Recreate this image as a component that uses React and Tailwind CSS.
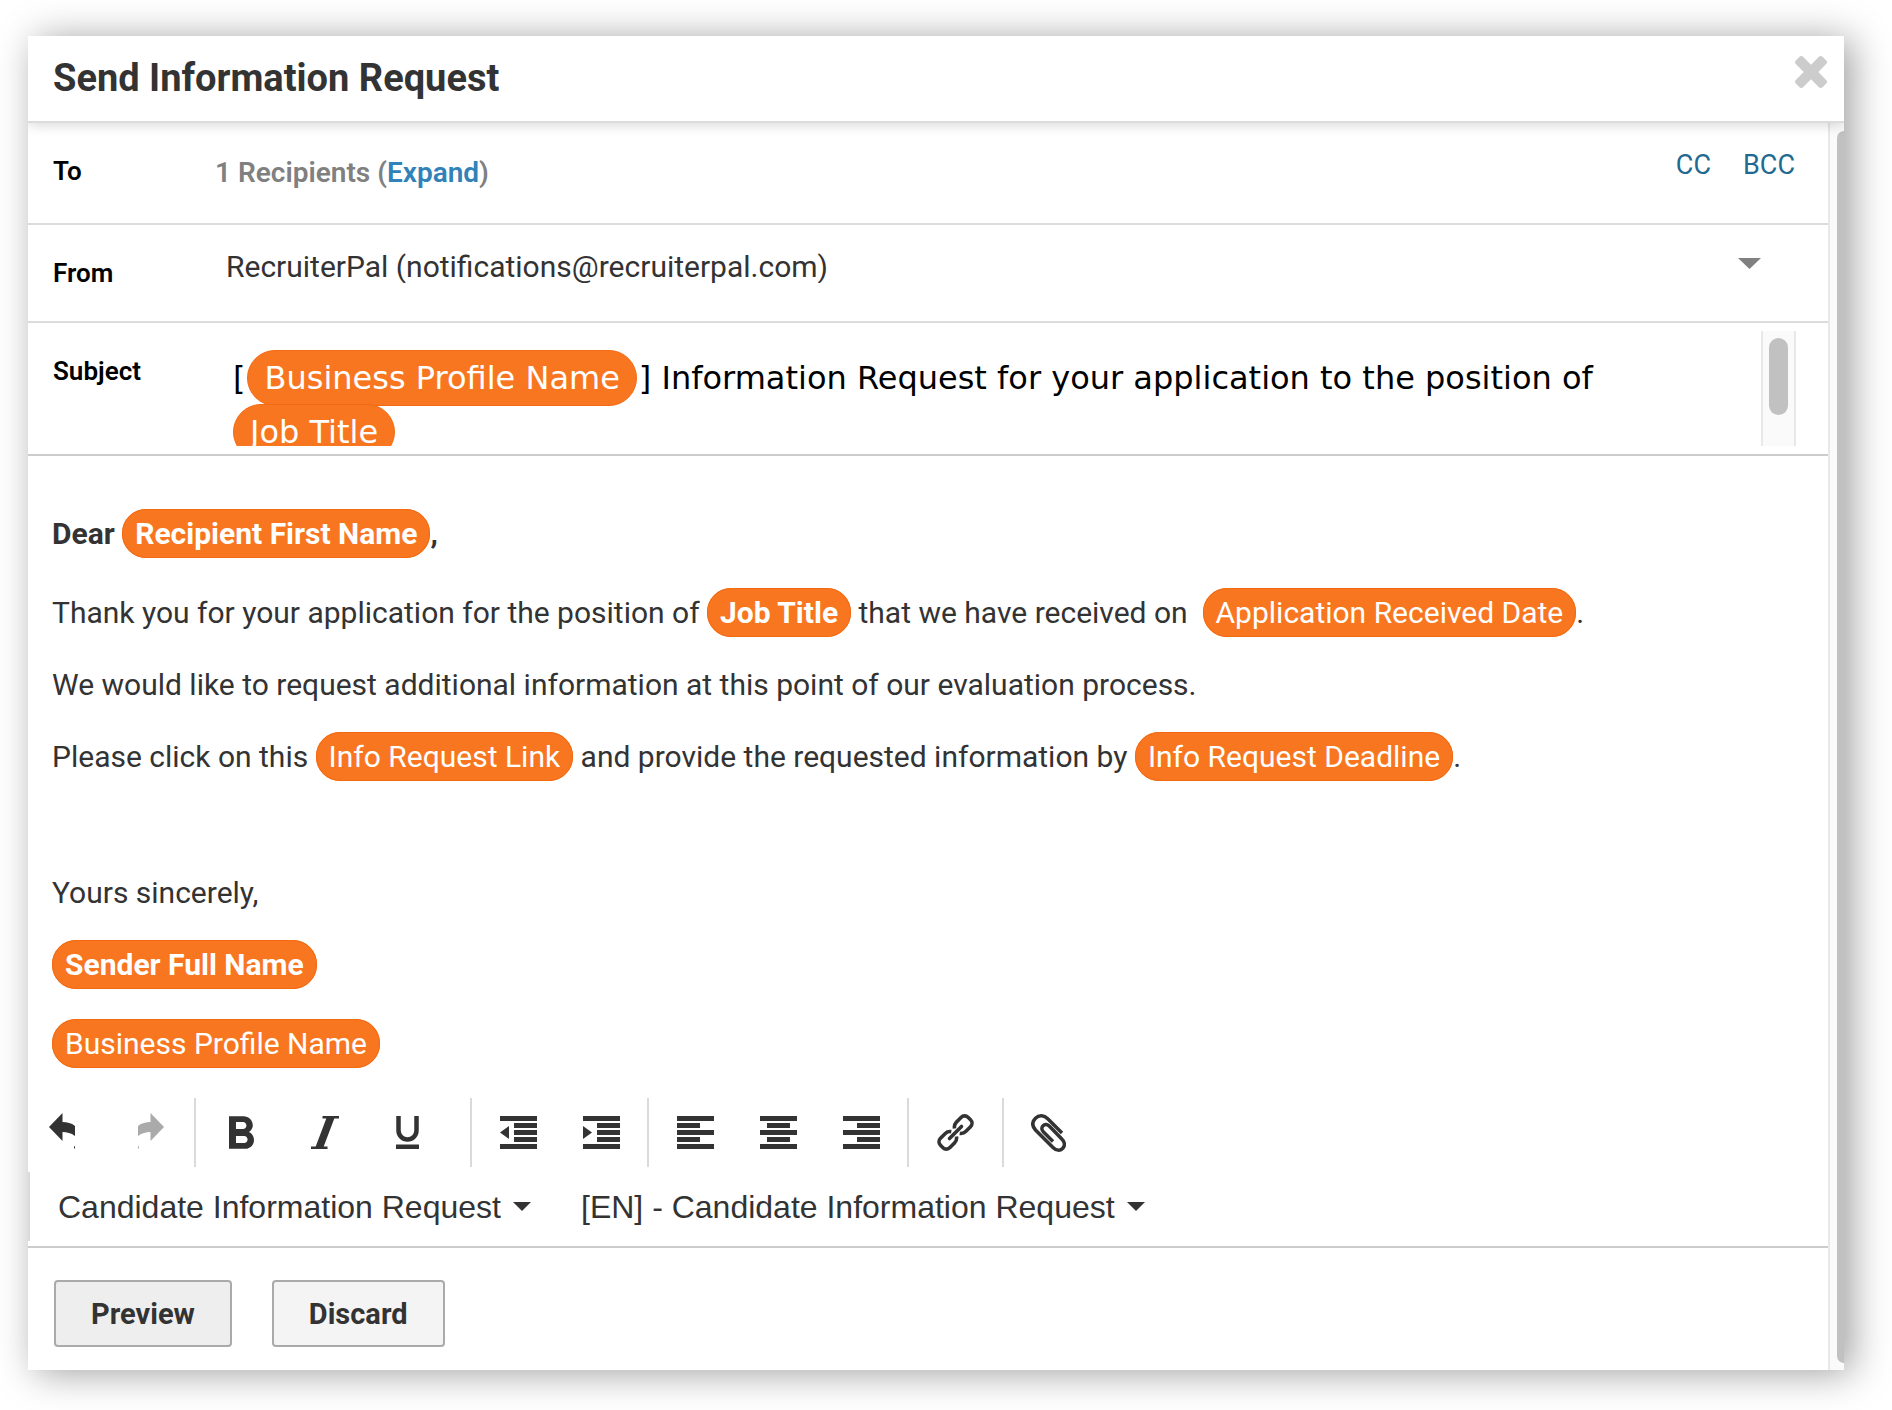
import React from "react";

function Icon({ w, h, box, children, className = "" }) {
  return (
    <svg width={w} height={h} viewBox={box || `0 0 ${w} ${h}`} className={className} aria-hidden="true">
      {children}
    </svg>
  );
}

function Caret({ className }) {
  return (
    <Icon w={18} h={9} className={className}>
      <path d="M0 0h18l-9 9z" fill="currentColor" />
    </Icon>
  );
}

function Tag({ children, bold }) {
  return (
    <span
      className={
        "whitespace-nowrap rounded-[24px] border border-[#f26a12] bg-[#f97620] px-3 py-1.5 text-white " +
        (bold ? "font-bold" : "")
      }
    >
      {children}
    </span>
  );
}

function SubjectTag({ children }) {
  return (
    <span className="-my-px inline-block h-14 rounded-[28px] border border-[#f26a12] bg-[#f97620] px-4 leading-[54px] text-white">
      {children}
    </span>
  );
}

function Field({ label, className, children }) {
  return (
    <div className={"flex items-start border-b-2 pl-[25px] " + className}>
      <div className="w-[162px] shrink-0 pt-8 text-[26px] leading-8 font-semibold text-black">{label}</div>
      {children}
    </div>
  );
}

function Tool({ label, children, disabled }) {
  return (
    <button
      type="button"
      aria-label={label}
      disabled={disabled}
      className="flex h-[69px] w-[83px] items-center justify-center text-[#333333] disabled:text-[#aaaaaa]"
    >
      {children}
    </button>
  );
}

function Bars({ rows, children }) {
  return (
    <Icon w={37} h={33}>
      {rows.map(([x, w], i) => (
        <rect key={i} x={x} y={i * 7} width={w} height={5} fill="currentColor" />
      ))}
      {children}
    </Icon>
  );
}

function TemplateSelect({ label, value }) {
  return (
    <div className="flex items-center gap-3">
      <select
        aria-label={label}
        defaultValue={value}
        className="appearance-none bg-transparent font-['Liberation_Sans',Arial,sans-serif] text-[32px] leading-10"
      >
        <option>{value}</option>
      </select>
      <Caret />
    </div>
  );
}

function ReplyArrow() {
  return (
    <>
      <path d="M0 14 13.500 0V9C18 9 22.500 10 26 13V23C22 20 18 19 13.500 19V28z" fill="currentColor" />
      <path d="M25 35.500v-1.500l1-1.500v3z" fill="currentColor" />
    </>
  );
}

export default function App() {
  return (
    <div className="min-h-screen bg-white pt-9 pr-12 pb-10 pl-7 font-[Roboto,sans-serif] text-[#333333]">
      <div role="dialog" aria-labelledby="dialog-title" className="bg-white shadow-[8px_3px_36px_rgba(0,0,0,0.38)]">
        <header className="relative flex h-[87px] items-center justify-between border-b-2 border-[#dcdcdc] pr-[17px] pb-[2px] pl-[25px] shadow-[0_2px_12px_rgba(0,0,0,0.16)] [clip-path:inset(0_0_-20px_0)]">
          <h1 id="dialog-title" className="text-[38px] leading-10 font-bold">
            Send Information Request
          </h1>
          <button type="button" aria-label="Close" className="mb-3 text-[#cccccc]">
            <Icon w={32} h={32} box="302 366 1188 1188">
              <path
                fill="currentColor"
                d="M1490 1322q0 40-28 68l-136 136q-28 28-68 28t-68-28l-294-294-294 294q-28 28-68 28t-68-28l-136-136q-28-28-28-68t28-68l294-294-294-294q-28-28-28-68t28-68l136-136q28-28 68-28t68 28l294 294 294-294q28-28 68-28t68 28l136 136q28 28 28 68t-28 68l-294 294 294 294q28 28 28 68z"
              />
            </Icon>
          </button>
        </header>

        <div className="flex">
          <main className="min-w-0 flex-1">
            <Field label="To" className="h-[102px] border-[#dcdcdc]">
              <div className="flex-1 pt-[34px] text-[28px] leading-8 font-semibold text-[#808080]">
                1 Recipients (
                <a href="#expand" className="text-[#3182b8]">
                  Expand
                </a>
                )
              </div>
              <div className="flex gap-8 pt-[26px] pr-[33px] text-[27px] leading-8 text-[#1f6a91]">
                <a href="#cc">CC</a>
                <a href="#bcc">BCC</a>
              </div>
            </Field>

            <Field label={<label htmlFor="from">From</label>} className="h-[98px] border-[#dcdcdc]">
              <div className="flex flex-1 items-start pt-[26px] pr-[67px] pl-[11px]">
                <select id="from" className="flex-1 appearance-none bg-transparent text-[30px] leading-8">
                  <option>RecruiterPal (notifications@recruiterpal.com)</option>
                </select>
                <Icon w={23} h={11} className="mt-[7px] text-[#808080]">
                  <path d="M0 0h23L11.500 11z" fill="currentColor" />
                </Icon>
              </div>
            </Field>

            <Field label="Subject" className="h-[133px] border-[#cccccc]">
              <div className="mt-2 flex h-[115px] flex-1 overflow-hidden pr-8 pl-[18px]">
                <div
                  role="textbox"
                  aria-label="Subject"
                  tabIndex={0}
                  className="min-w-0 flex-1 pt-5 pr-10 font-['DejaVu_Sans',Verdana,sans-serif] text-[32px] leading-[54px] text-black"
                >
                  <span className="mr-0.5">[</span>
                  <SubjectTag>Business Profile Name</SubjectTag>
                  <span className="ml-0.5">]</span> Information Request for your application to the position of{" "}
                  <SubjectTag>Job Title</SubjectTag>
                </div>
                <div className="flex w-[35px] justify-center border-x-2 border-[#e8e8e8] bg-[#fafafa] pt-[7px]">
                  <div className="h-[77px] w-[19px] rounded-full bg-[#c1c1c1]" />
                </div>
              </div>
            </Field>

            <div
              role="textbox"
              aria-label="Message"
              aria-multiline="true"
              tabIndex={0}
              className="pt-[58px] pr-6 pb-[34px] pl-6 text-[30px] leading-10"
            >
              <p className="mb-[39px] font-bold">
                Dear <Tag>Recipient First Name</Tag>,
              </p>
              <p className="mb-8">
                Thank you for your application for the position of <Tag bold>Job Title</Tag> that we have received on
                &nbsp;<Tag>Application Received Date</Tag>.
              </p>
              <p className="mb-8">We would like to request additional information at this point of our evaluation process.</p>
              <p className="mb-8">
                Please click on this <Tag>Info Request Link</Tag> and provide the requested information by{" "}
                <Tag>Info Request Deadline</Tag>.
              </p>
              <p className="mb-8 h-8" />
              <p className="mb-8">Yours sincerely,</p>
              <p className="mb-[39px]">
                <Tag bold>Sender Full Name</Tag>
              </p>
              <p>
                <Tag>Business Profile Name</Tag>
              </p>
            </div>

            <div role="toolbar" aria-label="Formatting" className="flex divide-x-2 divide-[#dadada]">
              <div className="flex w-[168px]">
                <Tool label="Undo">
                  <Icon w={26} h={36} className="mr-[15px] mb-[3px]">
                    <ReplyArrow />
                  </Icon>
                </Tool>
                <Tool label="Redo" disabled>
                  <Icon w={26} h={36} className="mr-1 mb-[3px]">
                    <g transform="matrix(-1 0 0 1 26 0)">
                      <ReplyArrow />
                    </g>
                  </Icon>
                </Tool>
              </div>
              <div className="flex pr-[21px] pl-1">
                <Tool label="Bold">
                  <Icon w={25} h={33} box="7 4 10.75 14">
                    <path
                      fill="currentColor"
                      d="M15.600 10.790c.97-.67 1.650-1.770 1.650-2.790 0-2.260-1.750-4-4-4H7v14h7.040c2.090 0 3.710-1.700 3.710-3.790 0-1.520-.86-2.820-2.150-3.420zM10 6.500h3c.83 0 1.500.67 1.500 1.500s-.67 1.500-1.500 1.500h-3v-3zm3.500 9H10v-3h3.500c.83 0 1.500.67 1.500 1.500s-.67 1.500-1.500 1.500z"
                    />
                  </Icon>
                </Tool>
                <Tool label="Italic">
                  <Icon w={28} h={33}>
                    <path d="M11.500 0H28v2.500H11.500zM0 30.500h16.500V33H0zM15.500 2h8L12.500 31h-8z" fill="currentColor" />
                  </Icon>
                </Tool>
                <Tool label="Underline">
                  <Icon w={23} h={33}>
                    <path d="M2.500 0v14.500a9 9 0 0 0 18 0V0" fill="none" stroke="currentColor" strokeWidth="4.500" />
                    <rect y="28.500" width="23" height="4.500" fill="currentColor" />
                  </Icon>
                </Tool>
              </div>
              <div className="flex pr-1 pl-[5px]">
                <Tool label="Decrease indent">
                  <Bars rows={[[0, 37], [14, 23], [14, 23], [14, 23], [0, 37]]}>
                    <path d="M9 10v13L0 16.500z" fill="currentColor" />
                  </Bars>
                </Tool>
                <Tool label="Increase indent">
                  <Bars rows={[[0, 37], [14, 23], [14, 23], [14, 23], [0, 37]]}>
                    <path d="M0 10v13l9-6.500z" fill="currentColor" />
                  </Bars>
                </Tool>
              </div>
              <div className="flex pr-1 pl-[5px]">
                <Tool label="Align left">
                  <Bars rows={[[0, 37], [0, 23], [0, 37], [0, 23], [0, 37]]} />
                </Tool>
                <Tool label="Align center">
                  <Bars rows={[[0, 37], [7, 23], [0, 37], [7, 23], [0, 37]]} />
                </Tool>
                <Tool label="Align right">
                  <Bars rows={[[0, 37], [14, 23], [0, 37], [14, 23], [0, 37]]} />
                </Tool>
              </div>
              <div className="flex px-[5px]">
                <Tool label="Insert link">
                  <Icon w={37} h={37}>
                    <g fill="none" stroke="currentColor" strokeWidth="3.600">
                      <path d="M17.500 14.500c-.5-3 .2-4.500 1.800-6.200l4.700-4.800c2-2 5-2.200 7-.2l2.500 2.500c2 2 2 5 0 7l-4.800 4.800c-1.700 1.700-3.200 2.200-6 1.800" />
                      <path d="M19.500 22.500c.5 3-.2 4.500-1.800 6.200L13 33.500c-2 2-5 2.200-7 .2l-2.500-2.500c-2-2-2-5 0-7l4.800-4.800c1.700-1.700 3.200-2.200 6-1.800" />
                      <path d="M12.500 24.500l12-12" strokeLinecap="round" />
                    </g>
                  </Icon>
                </Tool>
              </div>
              <div className="flex px-[3px]">
                <Tool label="Attach file">
                  <Icon w={35} h={38}>
                    <path
                      d="M31 19 17 5C13 1 8 .8 4.500 4.300S1 12 4.500 16L22 33.500c3.200 3.200 7 3.500 9.600.9s2.500-6.300-.8-9.500L18.500 12.300c-2-2-4.600-2.400-6.400-.6s-1.500 4.500.4 6.400l9.500 9.400"
                      fill="none"
                      stroke="currentColor"
                      strokeWidth="3.500"
                    />
                  </Icon>
                </Tool>
              </div>
            </div>

            <div className="mt-[5px] border-b-2 border-[#cccccc] pb-[5px]">
              <div className="flex h-[69px] items-center gap-[50px] border-l-2 border-[#dadada] pl-7">
                <TemplateSelect label="Template" value="Candidate Information Request" />
                <TemplateSelect label="Template language" value="[EN] - Candidate Information Request" />
              </div>
            </div>

            <div className="flex gap-10 px-[26px] pt-8 pb-[23px] text-[29px] leading-8 font-bold">
              <button type="button" className="h-[67px] rounded border-2 border-[#aaaaaa] bg-[#eeeeee] px-[35px]">
                Preview
              </button>
              <button type="button" className="h-[67px] rounded border-2 border-[#aaaaaa] bg-[#f4f4f4] px-[35px]">
                Discard
              </button>
            </div>
          </main>

          <div className="flex w-4 justify-end border-l-2 border-[#e8e8e8] bg-[#fafafa] pt-2 pb-[7px]">
            <div className="w-[7px] rounded-l-lg bg-[#c1c1c1]" />
          </div>
        </div>
      </div>
    </div>
  );
}
